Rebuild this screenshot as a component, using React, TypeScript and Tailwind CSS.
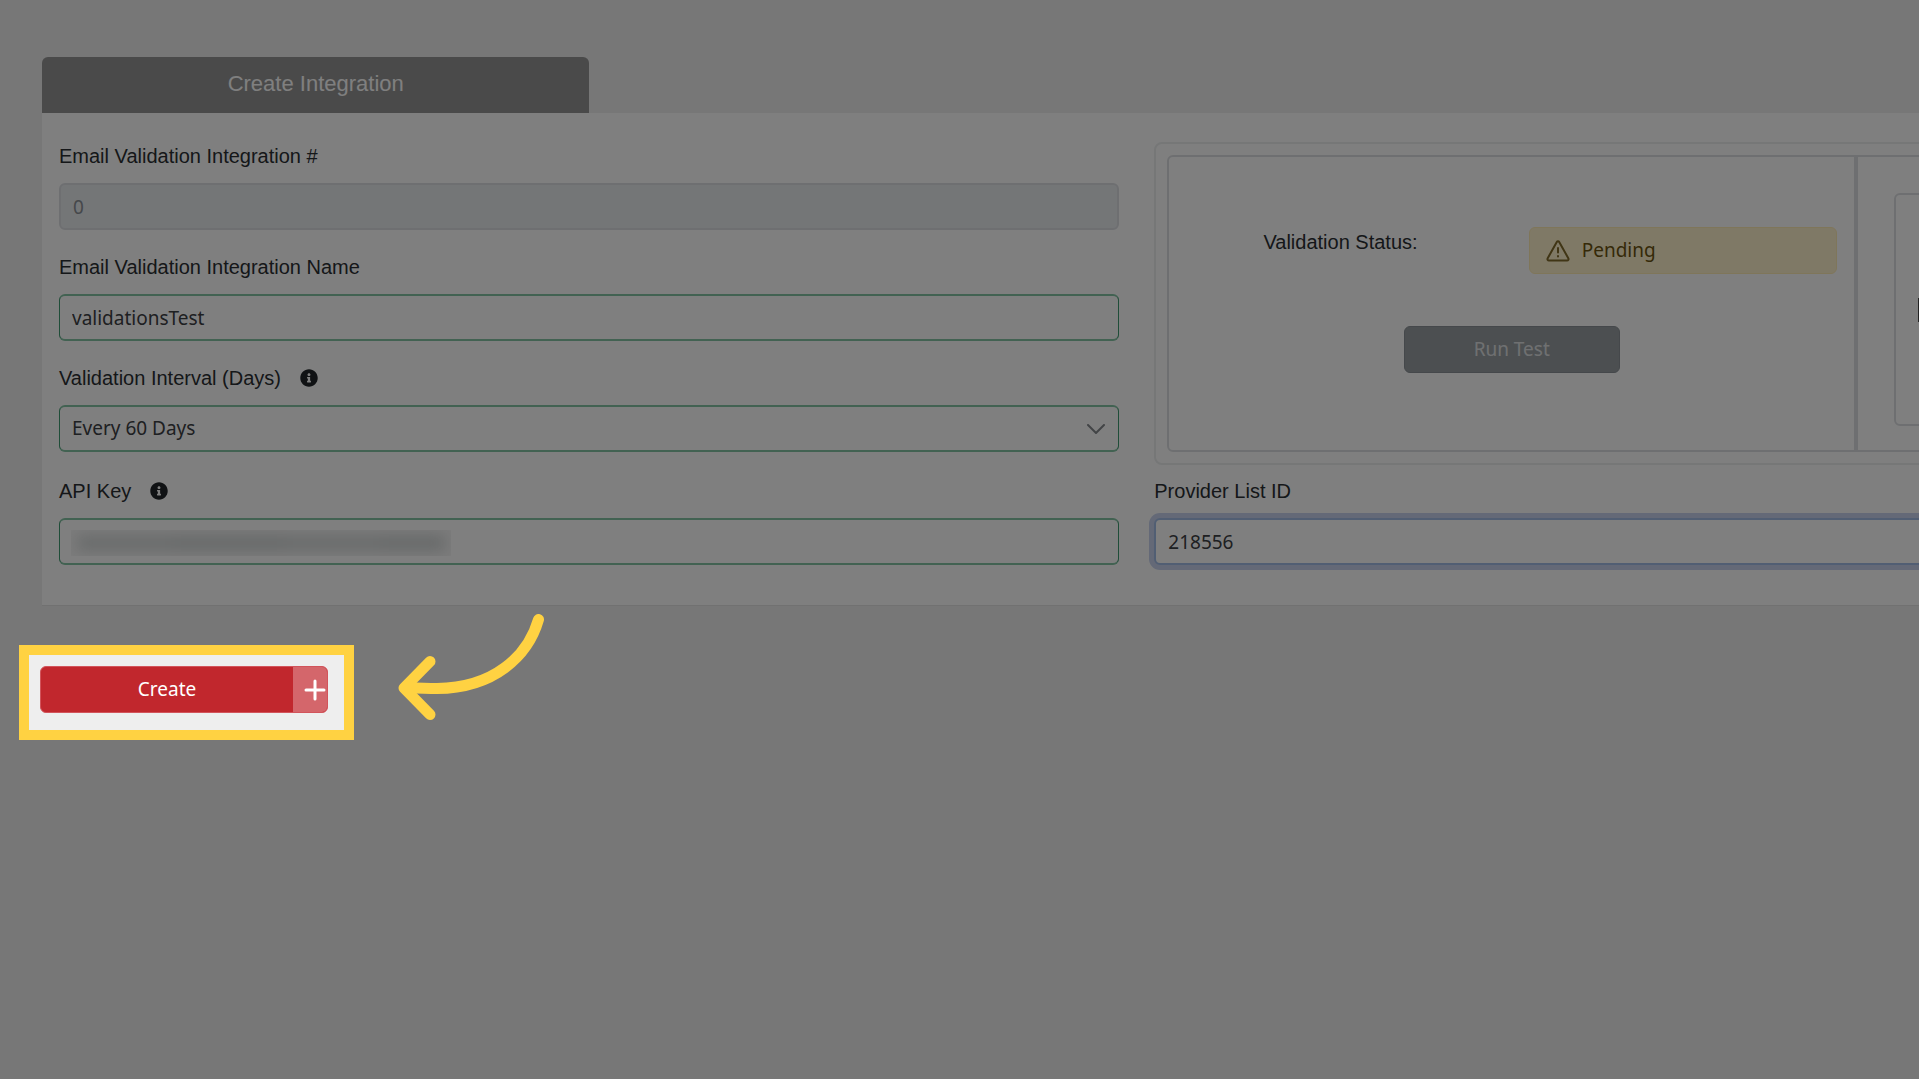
import type { ReactNode } from "react"
import { FaInfoCircle } from "react-icons/fa"

const valid =
  "h-[47px] w-full rounded-md border-x border-y-2 border-x-[#3f9a70] border-y-[#84c4a4] bg-white px-3 font-['Noto_Sans',sans-serif] text-[19px] text-[#3c4044] outline-none"

const keyBlobs = ["w-24", "w-28", "w-24", "w-16"]

type FieldProps = {
  id: string
  label: string
  info?: boolean
  children: ReactNode
}

function Field({ id, label, info, children }: FieldProps) {
  return (
    <div>
      <div className="mb-3 flex h-[30px] items-center gap-[19px]">
        <label htmlFor={id}>{label}</label>
        {info && <FaInfoCircle className="size-[18px] text-[#212529]" />}
      </div>
      {children}
    </div>
  )
}

function WarningIcon() {
  return (
    <svg
      viewBox="0 0 24 24"
      fill="none"
      stroke="#806a2a"
      strokeWidth="2"
      strokeLinecap="round"
      strokeLinejoin="round"
      className="size-6"
      aria-hidden="true"
    >
      <path d="M10.800 3L1.700 19.200C1.100 20.400 1.600 21.500 3 21.500H21C22.400 21.500 22.900 20.400 22.300 19.200L13.200 3C12.700 2.100 11.300 2.100 10.800 3Z" />
      <path d="M12 9V13.500M12 17V17.500" />
    </svg>
  )
}

function StatusPanel() {
  return (
    <div className="mt-px self-start rounded-lg border-2 border-[#eceeef] p-[11px]">
      <div className="grid grid-cols-[2fr_1fr] rounded-md border-2 border-[#dddfe2]">
        <div className="border-r-2 border-[#dddfe2] pt-[70px] pb-[77px]">
          <div className="grid grid-cols-2">
            <p className="px-[17px] text-center leading-[30px]">Validation Status:</p>
            <div className="px-[17px]">
              <div
                role="status"
                className="flex h-[47px] items-center gap-3 rounded-md border border-[#ffecb5] bg-[#fff3cd] px-4 font-['Noto_Sans',sans-serif] text-[19px] text-[#6b5310]"
              >
                <WarningIcon />
                Pending
              </div>
            </div>
          </div>
          <div className="mt-[52px] flex justify-center">
            <button
              type="button"
              disabled
              className="h-[47px] w-[216px] rounded-md border border-[#8a9196] bg-[#999fa2] font-['Noto_Sans',sans-serif] text-[19px] text-[#dfe1e3]"
            >
              Run Test
            </button>
          </div>
        </div>
        <div className="border-l-2 border-[#dddfe2] pt-9 pr-9 pb-6 pl-9">
          <div className="flex h-full items-center rounded-md border-2 border-[#dddfe2] px-[22px]">
            <span className="h-6 w-full bg-[#444]" />
          </div>
        </div>
      </div>
    </div>
  )
}

function Arrow() {
  return (
    <svg
      viewBox="0 0 148 108"
      fill="none"
      stroke="#ffd242"
      strokeWidth="11"
      strokeLinecap="round"
      strokeLinejoin="round"
      className="absolute -top-[31px] left-full ml-11 h-[108px] w-[148px]"
      aria-hidden="true"
    >
      <path d="M140.500 5.500C130 42 96 74 39 74.500C28 74.500 18 74 8 73.500" />
      <path d="M32 47.500L6 74L32 100.500" />
    </svg>
  )
}

export default function App() {
  return (
    <main className="relative min-h-screen overflow-hidden bg-[#eee] pt-[57px] font-['Liberation_Sans',Arial,sans-serif] text-[20px] text-[#2b2f33]">
      <form className="ml-[42px] w-[114.1%]">
        <h1 className="flex h-14 w-1/4 items-center justify-center rounded-t-md bg-[#949494] pb-1 text-[22px] text-white">
          Create Integration
        </h1>

        <div className="grid grid-cols-2 gap-x-[35px] gap-y-[11px] border-b border-[#e2e2e2] bg-white px-[17px] pt-7 pb-10">
          <div className="flex flex-col gap-[22px]">
            <Field id="integration-id" label="Email Validation Integration #">
              <input
                id="integration-id"
                disabled
                defaultValue="0"
                className="h-[47px] w-full rounded-md border-2 border-[#dcdfe3] bg-[#e9ecef] px-3 font-['Noto_Sans',sans-serif] text-[19px] text-[#8b9096]"
              />
            </Field>
            <Field id="integration-name" label="Email Validation Integration Name">
              <input id="integration-name" defaultValue="validationsTest" className={valid} />
            </Field>
            <Field id="interval" label="Validation Interval (Days)" info>
              <div className="relative">
                <select id="interval" defaultValue="60" className={`${valid} appearance-none`}>
                  <option value="30">Every 30 Days</option>
                  <option value="60">Every 60 Days</option>
                  <option value="90">Every 90 Days</option>
                </select>
                <svg
                  viewBox="0 0 18 10"
                  fill="none"
                  stroke="#85898d"
                  strokeWidth="2"
                  strokeLinecap="round"
                  strokeLinejoin="round"
                  className="pointer-events-none absolute top-[19px] right-3.5 h-2.5 w-[18px]"
                  aria-hidden="true"
                >
                  <path d="M1 1L9 9L17 1" />
                </svg>
              </div>
            </Field>
          </div>

          <StatusPanel />

          <Field id="api-key" label="API Key" info>
            <div className="relative">
              <input id="api-key" className={valid} />
              {/* redacted key */}
              <div className="pointer-events-none absolute top-3 left-3 flex h-[26px] w-[380px] items-center justify-center overflow-hidden bg-[#f8f8f8]">
                <div className="flex blur-[7px]">
                  {keyBlobs.map((w, i) => (
                    <span key={i} className={`${w} h-4 bg-[#d0d4d4] odd:bg-[#d4d8d8]`} />
                  ))}
                </div>
              </div>
            </div>
          </Field>

          <Field id="list-id" label="Provider List ID">
            <input
              id="list-id"
              defaultValue="218556"
              className="h-[47px] w-full rounded-md border-2 border-[#a3bde6] bg-white px-3 font-['Noto_Sans',sans-serif] text-[19px] text-[#3c4044] ring-[5px] ring-[#c8d3ee] outline-none"
            />
          </Field>
        </div>
      </form>

      <div className="relative z-10 mt-[39px] ml-[19px] w-[335px]">
        <div className="border-10 border-[#ffd242] pt-[11px] pr-4 pb-[17px] pl-[11px] shadow-[0_0_0_3000px_rgba(0,0,0,0.5)]">
          <button
            type="button"
            className="flex h-[47px] w-full overflow-hidden rounded-md border border-[#d2545b] bg-[#c1272d] font-['Noto_Sans',sans-serif] text-[19px] text-white"
          >
            <span className="flex h-full flex-1 items-center justify-center">Create</span>
            <span className="flex h-full w-[34px] items-center justify-end bg-[#d4666b] pr-px">
              <svg viewBox="0 0 22 22" stroke="currentColor" strokeWidth="3" strokeLinecap="round" className="size-[22px]" aria-hidden="true">
                <path d="M11 2V20M2 11H20" />
              </svg>
            </span>
          </button>
        </div>
        <Arrow />
      </div>
    </main>
  )
}
